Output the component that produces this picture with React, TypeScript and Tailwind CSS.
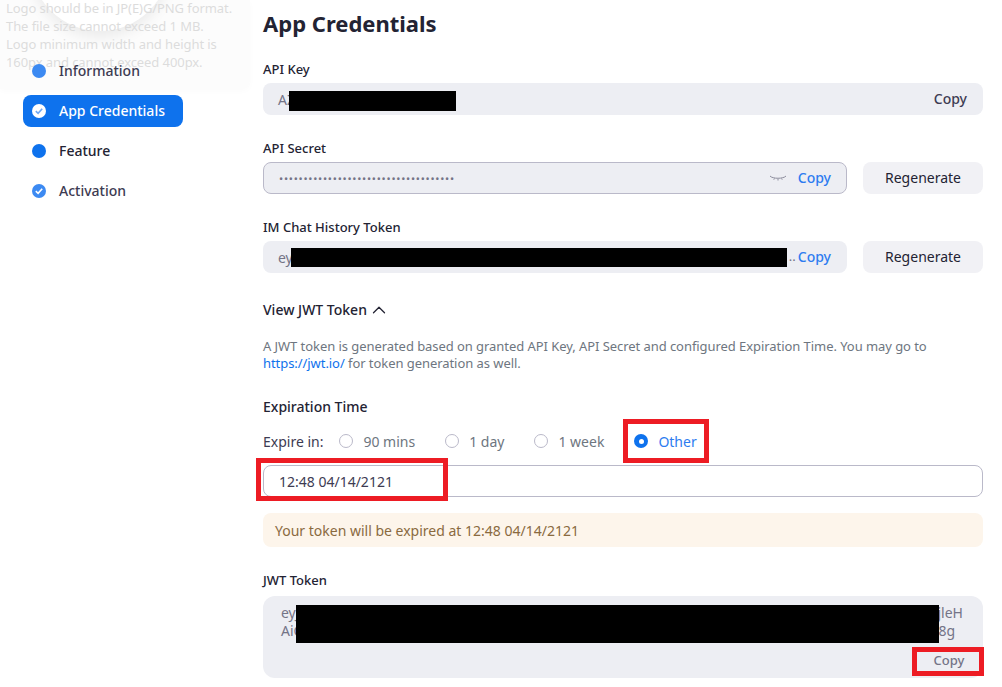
import { ChevronUp } from "lucide-react";

const font = "font-['Noto_Sans','Liberation_Sans',sans-serif]";

function Redact({ className }: { className: string }) {
  return <div className={`absolute bg-black ${className}`} />;
}

function Bullet({ checked, active, faded }: { checked?: boolean; active?: boolean; faded?: boolean }) {
  const bg = active ? "bg-white" : faded ? "bg-[#3c8af2]" : "bg-[#0e72ed]";
  return (
    <span className={`flex h-[14px] w-[14px] shrink-0 items-center justify-center rounded-full ${bg}`}>
      {checked && (
        <svg width="10" height="10" viewBox="0 0 10 10" fill="none">
          <path
            d="M1.8 5.2 4.1 7.4 8.2 2.8"
            stroke={active ? "#6ea8f5" : "#ffffff"}
            strokeWidth="1.6"
          />
        </svg>
      )}
    </span>
  );
}

function NavItem({ label, active, checked, faded }: { label: string; active?: boolean; checked?: boolean; faded?: boolean }) {
  return (
    <div
      className={`flex h-8 items-center gap-[13px] rounded-lg pl-[9px] text-[14px] font-medium ${
        active ? "bg-[#0e72ed] text-white" : faded ? "text-[#3d3b52]" : "text-[#232333]"
      }`}
    >
      <Bullet checked={checked} active={active} faded={faded} />
      <span className="pb-[2px]">{label}</span>
    </div>
  );
}

function CopyLink() {
  return <span className="pb-[2px] text-[14px] font-medium text-[#2d7cf0]">Copy</span>;
}

function RegenerateButton() {
  return (
    <button className="h-8 w-[120px] shrink-0 rounded-lg bg-[#f1f1f5] pb-[2px] text-[14px] text-[#232333]">
      Regenerate
    </button>
  );
}

function Radio({ label, checked }: { label: string; checked?: boolean }) {
  return (
    <label className={`flex items-center gap-[10px] text-[14px] ${checked ? "text-[#2d7cf0]" : "text-[#6e7680]"}`}>
      {checked ? (
        <span className="flex h-[14px] w-[14px] items-center justify-center rounded-full bg-[#0e72ed]">
          <span className="h-[5px] w-[5px] rounded-full bg-white" />
        </span>
      ) : (
        <span className="h-[14px] w-[14px] rounded-full border border-[#bab9c9] bg-white" />
      )}
      {label}
    </label>
  );
}

export default function App() {
  return (
    <div className={`flex h-[687px] w-[1002px] overflow-hidden bg-white ${font}`}>
      {/* Sidebar, with the logo popover fading out behind it */}
      <aside className="relative w-[250px] shrink-0 pt-[55px]">
        <div className="absolute left-0 top-0 h-[89px] w-[250px] rounded-br-lg bg-[#fcfcfc] shadow-[0_2px_6px_rgba(0,0,0,0.02)]">
          <div className="absolute -top-[110px] left-[30px] h-[141px] w-[140px] rounded-full bg-white shadow-[0_6px_14px_rgba(0,0,0,0.07)]" />
          <p className="relative -mt-px w-[240px] pl-[6px] text-[13px] leading-[18px] tracking-[-0.08px] text-[#dcdcdc]">
            Logo should be in JP(E)G/PNG format.
            <br />
            The file size cannot exceed 1 MB.
            <br />
            Logo minimum width and height is
            <br />
            160px and cannot exceed 400px.
          </p>
        </div>
        <nav className="relative ml-[23px] flex w-[160px] flex-col gap-2">
          <NavItem label="Information" faded />
          <NavItem label="App Credentials" active checked />
          <NavItem label="Feature" />
          <NavItem label="Activation" checked faded />
        </nav>
      </aside>

      {/* Main column */}
      <main className="flex w-[733px] flex-col pl-[13px] text-[#232333]">
        <h1 className="mt-[8px] h-[30px] text-[22px] font-bold leading-[30px]">App Credentials</h1>

        <div className="mt-[22px] h-[19px] text-[13px] font-medium leading-[19px]">API Key</div>
        <div className="relative mt-1 flex h-8 items-center justify-between rounded-lg bg-[#edeef3] pl-[15px] pr-[16px]">
          <span className="text-[14px] text-[#747487]">AZ</span>
          <span className="pb-[2px] text-[14px] font-medium text-[#3d3b52]">Copy</span>
          <Redact className="left-[26px] top-2 h-5 w-[167px]" />
        </div>

        <div className="mt-[24px] h-[19px] text-[13px] font-medium leading-[19px]">API Secret</div>
        <div className="mt-1 flex gap-4">
          <div className="flex h-8 flex-1 items-center rounded-lg border border-[#bab9c9] bg-[#edeef3] pl-[15px] pr-[15px]">
            <span className="flex-1 text-[11px] leading-none tracking-[0.75px] text-[#747487]">
              ••••••••••••••••••••••••••••••••••••
            </span>
            <svg width="18" height="10" viewBox="0 0 18 10" fill="none" className="mr-[11px]">
              <path d="M1 3c2.500 3 13.500 3 16 0M5.500 5.500l-.7 1.200M9 6v1.500M12.500 5.500l.7 1.200" stroke="#8c8c9c" strokeWidth="1" />
            </svg>
            <CopyLink />
          </div>
          <RegenerateButton />
        </div>

        <div className="mt-[24px] h-[19px] text-[13px] font-medium leading-[19px]">IM Chat History Token</div>
        <div className="mt-1 flex gap-4">
          <div className="relative flex h-8 flex-1 items-center justify-between rounded-lg bg-[#edeef3] pl-[15px] pr-[16px]">
            <span className="text-[14px] text-[#747487]">ey</span>
            <span className="flex items-center gap-[2px]">
              <span className="text-[13px] text-[#747487]">..</span>
              <CopyLink />
            </span>
            <Redact className="left-[28px] top-[7px] h-[19px] w-[496px]" />
          </div>
          <RegenerateButton />
        </div>

        <div className="mt-[26px] flex h-[22px] items-center text-[14px] font-medium leading-[22px]">
          View JWT Token
          <ChevronUp size={22} strokeWidth={1.4} className="ml-px" />
        </div>

        <p className="mt-[17px] text-[13px] leading-[17px] tracking-[-0.06px] text-[#6e7680]">
          A JWT token is generated based on granted API Key, API Secret and configured Expiration Time. You may go to
          <br />
          <span className="text-[#0e72ed]">https://jwt.io/</span> for token generation as well.
        </p>

        <div className="mt-[25px] h-[20px] text-[14px] font-medium leading-[20px]">Expiration Time</div>

        <div className="relative mt-[14px] flex h-[20px] items-center text-[14px]">
          <span className="mr-[16px] text-[#3d3b52]">Expire in:</span>
          <div className="flex items-center gap-[30px]">
            <Radio label="90 mins" />
            <Radio label="1 day" />
            <Radio label="1 week" />
            <Radio label="Other" checked />
          </div>
          <div className="absolute left-[360px] -top-[12px] h-[44px] w-[86px] border-[5px] border-[#ed1c24]" />
        </div>

        <div className="relative mt-[14px] flex h-8 items-center rounded-lg border border-[#bab9c9] pl-[15px] text-[14px] text-[#3d3b52]">
          12:48 04/14/2121
          <div className="absolute -left-[8px] -top-[8px] h-[43px] w-[192px] border-[5px] border-[#ed1c24]" />
        </div>

        <div className="mt-4 flex h-[34px] items-center rounded-lg bg-[#fdf5eb] pl-3 text-[14px] text-[#8a6a3f]">
          Your token will be expired at 12:48 04/14/2121
        </div>

        <div className="mt-[24px] h-[19px] text-[13px] font-medium leading-[19px]">JWT Token</div>
        <div className="relative mt-[6px] h-[82px] rounded-xl bg-[#edeef3] pl-[18px] pr-[21px] pt-[8px] text-[14px] leading-[18px] text-[#747487]">
          <div className="flex justify-between">
            <span>eyJ</span>
            <span className="-mr-px">jleH</span>
          </div>
          <div className="flex justify-between pr-[7px]">
            <span>AiC</span>
            <span>8g</span>
          </div>
          <Redact className="left-[33px] top-[9px] h-[38px] w-[643px]" />
          <div className="absolute bottom-[2px] -right-px flex h-[29px] w-[72px] items-center justify-center border-[5px] border-[#ed1c24] pb-[3px] pl-[2px] text-[13px] font-medium text-[#747487]">
            Copy
          </div>
        </div>
      </main>
    </div>
  );
}
